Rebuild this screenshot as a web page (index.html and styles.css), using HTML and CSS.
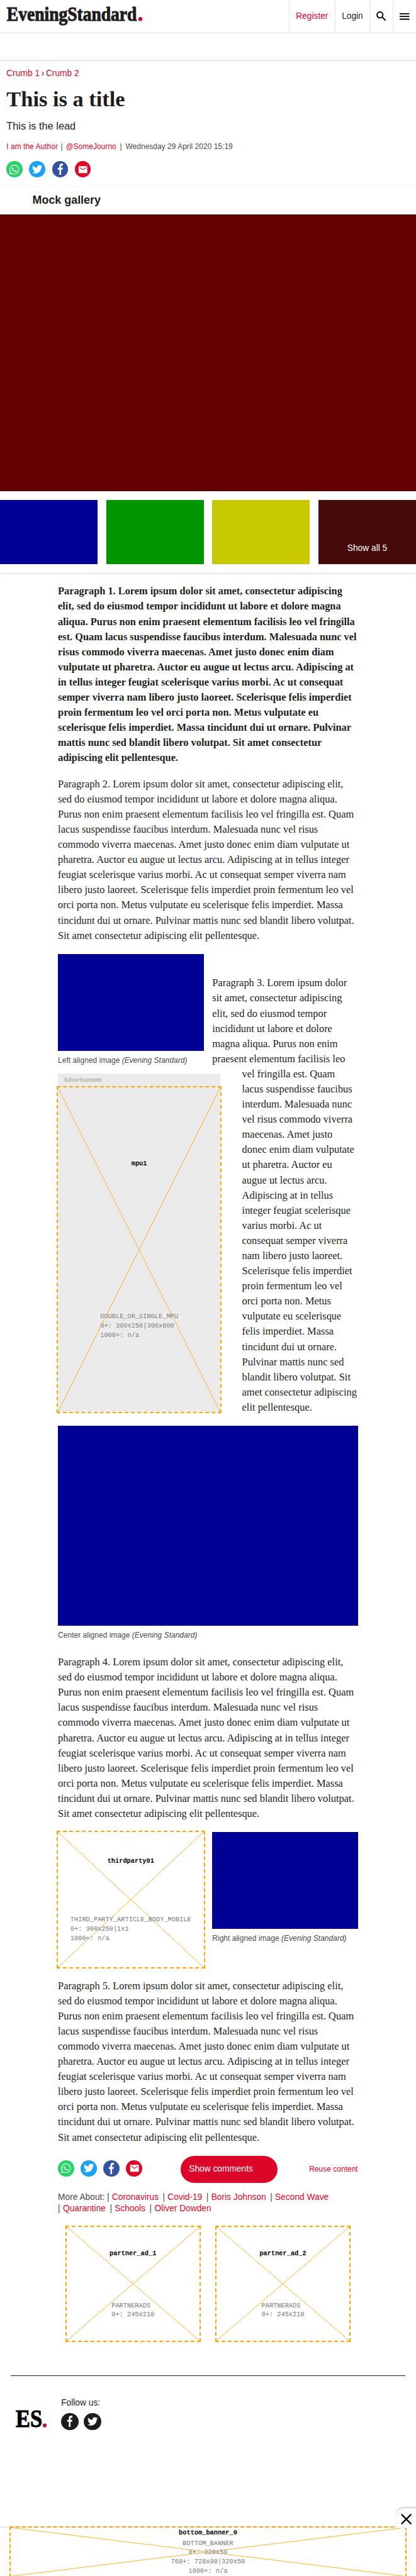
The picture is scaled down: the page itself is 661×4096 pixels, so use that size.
FILE: index.html
```html
<!DOCTYPE html>
<html lang="en">
<head>
<meta charset="utf-8">
<title>This is a title | Evening Standard</title>
<link rel="stylesheet" href="styles.css">
</head>
<body>
<svg class="defs" aria-hidden="true">
  <symbol id="i-whatsapp" viewBox="0 0 24 24"><path fill="currentColor" d="M17.5 14.4c-.3-.15-1.75-.86-2-.96-.28-.1-.48-.15-.68.15-.2.3-.77.96-.94 1.16-.17.2-.35.22-.64.07-.3-.15-1.26-.46-2.4-1.47-.88-.79-1.48-1.76-1.65-2.06-.17-.3-.02-.46.13-.6.13-.14.3-.35.45-.53.15-.17.2-.3.3-.5.1-.2.05-.37-.03-.52-.07-.15-.67-1.61-.91-2.2-.24-.59-.49-.5-.67-.51h-.57c-.2 0-.52.07-.79.37-.27.3-1.04 1.01-1.04 2.47s1.06 2.88 1.21 3.07c.15.2 2.1 3.2 5.08 4.49.71.3 1.26.49 1.69.62.71.23 1.36.2 1.87.12.57-.08 1.76-.71 2-1.4.25-.7.25-1.3.18-1.42-.07-.13-.27-.2-.57-.35zM12.05 21.8a9.87 9.87 0 0 1-5.03-1.38l-.36-.21-3.74.98 1-3.65-.24-.37a9.86 9.86 0 0 1-1.5-5.26c0-5.45 4.43-9.88 9.88-9.88a9.88 9.88 0 0 1 9.88 9.89c0 5.45-4.43 9.88-9.89 9.88zm8.42-18.3A11.82 11.82 0 0 0 12.05 0C5.5 0 .16 5.33.16 11.89c0 2.1.55 4.14 1.59 5.94L.06 24l6.3-1.65a11.88 11.88 0 0 0 5.69 1.45c6.55 0 11.89-5.34 11.89-11.9a11.82 11.82 0 0 0-3.48-8.4z"/></symbol>
  <symbol id="i-twitter" viewBox="0 0 24 24"><path fill="currentColor" d="M23.95 4.57a10 10 0 0 1-2.82.77 4.96 4.96 0 0 0 2.16-2.72c-.95.55-2 .96-3.13 1.18a4.92 4.92 0 0 0-8.38 4.48C7.69 8.1 4.07 6.13 1.64 3.16a4.82 4.82 0 0 0-.67 2.48c0 1.71.87 3.21 2.19 4.1a4.9 4.9 0 0 1-2.23-.62v.06a4.92 4.92 0 0 0 3.95 4.83 5 5 0 0 1-2.21.08 4.94 4.94 0 0 0 4.6 3.42A9.87 9.87 0 0 1 0 19.54a13.99 13.99 0 0 0 7.55 2.21c9.05 0 14-7.5 14-13.98 0-.21 0-.42-.02-.63a9.94 9.94 0 0 0 2.46-2.55z"/></symbol>
  <symbol id="i-facebook" viewBox="0 0 12 24"><path fill="currentColor" d="M7.8 24V13.1h3.2l.5-4.2H7.8V6.2c0-1.2.4-2 2.1-2h1.9V.3C11.4.2 10.3.1 9.1.1 6.2.1 4.2 1.9 4.2 5.2v3.700H.8v4.200h3.400V24z"/></symbol>
  <symbol id="i-mail" viewBox="0 0 18 18"><path fill="currentColor" d="M1 2.600h16v12.800H1z"/><path fill="none" stroke="#dd0528" stroke-width="1.2" d="M3 5.300l6 3.800 6-3.800"/></symbol>
</svg>
<div class="page">
  <header class="header">
    <div class="masthead">
      <a class="logo"><svg width="258" height="50" viewBox="0 0 258 50"><text class="logo-text" x="1" y="33" textLength="240" lengthAdjust="spacingAndGlyphs">EveningStandard</text><circle cx="247.500" cy="29.300" r="3.700" fill="#dd0528"/></svg></a>
      <nav class="tools">
        <a class="tool register">Register</a>
        <a class="tool login">Login</a>
        <a class="tool search"><svg width="18" height="18" viewBox="0 0 18 18"><circle cx="6.600" cy="6.600" r="5.400"/><path d="M10.500 10.500L17 17"/></svg></a>
        <a class="tool menu"><svg width="18" height="12" viewBox="0 0 18 12"><path d="M0 1h18M0 6h18M0 11h18"/></svg></a>
      </nav>
    </div>
    <div class="subnav"></div>
  </header>
  <section class="intro">
    <nav class="crumbs"><a>Crumb 1</a><span class="sep">›</span><a>Crumb 2</a></nav>
    <h1>This is a title</h1>
    <p class="lead">This is the lead</p>
    <p class="byline"><a>I am the Author</a><span class="bar">|</span><a>@SomeJourno</a><span class="bar wide">|</span><span>Wednesday 29 April 2020 15:19</span></p>
    <div class="share">
      <a class="dot wa"><svg><use href="#i-whatsapp"/></svg></a>
      <a class="dot tw"><svg><use href="#i-twitter"/></svg></a>
      <a class="dot fb"><svg><use href="#i-facebook"/></svg></a>
      <a class="dot ml"><svg><use href="#i-mail"/></svg></a>
    </div>
  </section>
  <section class="gallery">
    <h2>Mock gallery</h2>
    <div class="hero"></div>
    <div class="thumbs">
      <div class="thumb blue"></div>
      <div class="thumb green"></div>
      <div class="thumb yellow"></div>
      <div class="thumb more">Show all 5</div>
    </div>
  </section>
  <article class="body">
    <p class="first">Paragraph 1. Lorem ipsum dolor sit amet, consectetur adipiscing elit, sed do eiusmod tempor incididunt ut labore et dolore magna aliqua. Purus non enim praesent elementum facilisis leo vel fringilla est. Quam lacus suspendisse faucibus interdum. Malesuada nunc vel risus commodo viverra maecenas. Amet justo donec enim diam vulputate ut pharetra. Auctor eu augue ut lectus arcu. Adipiscing at in tellus integer feugiat scelerisque varius morbi. Ac ut consequat semper viverra nam libero justo laoreet. Scelerisque felis imperdiet proin fermentum leo vel orci porta non. Metus vulputate eu scelerisque felis imperdiet. Massa tincidunt dui ut ornare. Pulvinar mattis nunc sed blandit libero volutpat. Sit amet consectetur adipiscing elit pellentesque.</p>
    <p>Paragraph 2. Lorem ipsum dolor sit amet, consectetur adipiscing elit, sed do eiusmod tempor incididunt ut labore et dolore magna aliqua. Purus non enim praesent elementum facilisis leo vel fringilla est. Quam lacus suspendisse faucibus interdum. Malesuada nunc vel risus commodo viverra maecenas. Amet justo donec enim diam vulputate ut pharetra. Auctor eu augue ut lectus arcu. Adipiscing at in tellus integer feugiat scelerisque varius morbi. Ac ut consequat semper viverra nam libero justo laoreet. Scelerisque felis imperdiet proin fermentum leo vel orci porta non. Metus vulputate eu scelerisque felis imperdiet. Massa tincidunt dui ut ornare. Pulvinar mattis nunc sed blandit libero volutpat. Sit amet consectetur adipiscing elit pellentesque.</p>
    <div class="wrap">
      <figure class="left"><div class="img"></div><figcaption>Left aligned image <i>(Evening Standard)</i></figcaption></figure>
      <aside class="mpu">
        <div class="label">Advertisement</div>
        <div class="ad"><svg class="cross"><line x1="0" y1="0" x2="100%" y2="100%"/><line x1="100%" y1="0" x2="0" y2="100%"/></svg><b>mpu1</b><div class="spec">DOUBLE_OR_SINGLE_MPU<br>0+: 300x250|300x600<br>1000+: n/a</div></div>
      </aside>
      <p>Paragraph 3. Lorem ipsum dolor sit amet, consectetur adipiscing elit, sed do eiusmod tempor incididunt ut labore et dolore magna aliqua. Purus non enim praesent elementum facilisis leo vel fringilla est. Quam lacus suspendisse faucibus interdum. Malesuada nunc vel risus commodo viverra maecenas. Amet justo donec enim diam vulputate ut pharetra. Auctor eu augue ut lectus arcu. Adipiscing at in tellus integer feugiat scelerisque varius morbi. Ac ut consequat semper viverra nam libero justo laoreet. Scelerisque felis imperdiet proin fermentum leo vel orci porta non. Metus vulputate eu scelerisque felis imperdiet. Massa tincidunt dui ut ornare. Pulvinar mattis nunc sed blandit libero volutpat. Sit amet consectetur adipiscing elit pellentesque.</p>
    </div>
    <figure class="center"><div class="img"></div><figcaption>Center aligned image <i>(Evening Standard)</i></figcaption></figure>
    <p>Paragraph 4. Lorem ipsum dolor sit amet, consectetur adipiscing elit, sed do eiusmod tempor incididunt ut labore et dolore magna aliqua. Purus non enim praesent elementum facilisis leo vel fringilla est. Quam lacus suspendisse faucibus interdum. Malesuada nunc vel risus commodo viverra maecenas. Amet justo donec enim diam vulputate ut pharetra. Auctor eu augue ut lectus arcu. Adipiscing at in tellus integer feugiat scelerisque varius morbi. Ac ut consequat semper viverra nam libero justo laoreet. Scelerisque felis imperdiet proin fermentum leo vel orci porta non. Metus vulputate eu scelerisque felis imperdiet. Massa tincidunt dui ut ornare. Pulvinar mattis nunc sed blandit libero volutpat. Sit amet consectetur adipiscing elit pellentesque.</p>
    <div class="pair">
      <div class="ad third"><svg class="cross"><line x1="0" y1="0" x2="100%" y2="100%"/><line x1="100%" y1="0" x2="0" y2="100%"/></svg><b>thirdparty01</b><div class="spec">THIRD_PARTY_ARTICLE_BODY_MOBILE<br>0+: 300x250|1x1<br>1000+: n/a</div></div>
      <figure class="right"><div class="img"></div><figcaption>Right aligned image <i>(Evening Standard)</i></figcaption></figure>
    </div>
    <p>Paragraph 5. Lorem ipsum dolor sit amet, consectetur adipiscing elit, sed do eiusmod tempor incididunt ut labore et dolore magna aliqua. Purus non enim praesent elementum facilisis leo vel fringilla est. Quam lacus suspendisse faucibus interdum. Malesuada nunc vel risus commodo viverra maecenas. Amet justo donec enim diam vulputate ut pharetra. Auctor eu augue ut lectus arcu. Adipiscing at in tellus integer feugiat scelerisque varius morbi. Ac ut consequat semper viverra nam libero justo laoreet. Scelerisque felis imperdiet proin fermentum leo vel orci porta non. Metus vulputate eu scelerisque felis imperdiet. Massa tincidunt dui ut ornare. Pulvinar mattis nunc sed blandit libero volutpat. Sit amet consectetur adipiscing elit pellentesque.</p>
    <div class="actions">
      <div class="share">
        <a class="dot wa"><svg><use href="#i-whatsapp"/></svg></a>
        <a class="dot tw"><svg><use href="#i-twitter"/></svg></a>
        <a class="dot fb"><svg><use href="#i-facebook"/></svg></a>
        <a class="dot ml"><svg><use href="#i-mail"/></svg></a>
      </div>
      <a class="comments">Show comments</a>
      <a class="reuse">Reuse content</a>
    </div>
    <div class="topics">More About: <i>|</i><a>Coronavirus</a> <i>|</i><a>Covid-19</a> <i>|</i><a>Boris Johnson</a> <i>|</i><a>Second Wave</a><br><i>|</i><a>Quarantine</a> <i>|</i><a>Schools</a> <i>|</i><a>Oliver Dowden</a></div>
    <div class="partners">
      <div class="ad partner"><svg class="cross"><line x1="0" y1="0" x2="100%" y2="100%"/><line x1="100%" y1="0" x2="0" y2="100%"/></svg><b>partner_ad_1</b><div class="spec">PARTNERADS<br>0+: 245x210</div></div>
      <div class="ad partner"><svg class="cross"><line x1="0" y1="0" x2="100%" y2="100%"/><line x1="100%" y1="0" x2="0" y2="100%"/></svg><b>partner_ad_2</b><div class="spec">PARTNERADS<br>0+: 245x210</div></div>
    </div>
  </article>
  <footer class="footer">
    <svg class="es" width="60" height="52" viewBox="0 0 60 52"><text class="es-text" x="0" y="42" textLength="49" lengthAdjust="spacingAndGlyphs">ES</text><circle cx="53.500" cy="39" r="3.600" fill="#c8102e"/></svg>
    <div class="follow">
      <span>Follow us:</span>
      <div class="socials"><a class="dot fb"><svg><use href="#i-facebook"/></svg></a><a class="dot tw"><svg><use href="#i-twitter"/></svg></a></div>
    </div>
  </footer>
  <div class="banner">
    <div class="ad bottom"><svg class="cross"><line x1="0" y1="0" x2="100%" y2="100%"/><line x1="100%" y1="0" x2="0" y2="100%"/></svg><b>bottom_banner_0</b><div class="spec">BOTTOM_BANNER<br>0+: 320x50<br>768+: 728x90|320x50<br>1000+: n/a</div></div>
    <a class="close"><svg width="20" height="20" viewBox="0 0 20 20"><path d="M1 1l18 18M19 1L1 19"/></svg></a>
  </div>
</div>
</body>
</html>
```
FILE: styles.css
```css
* { box-sizing: border-box; }
html, body { margin: 0; overflow: hidden; background: #fff; }
.defs { display: none; }
.page {
  zoom: 0.8604;
  width: 768.2px;
  height: 4761px;
  overflow: hidden;
  display: flex;
  flex-direction: column;
  font: 16px/1.3 "Liberation Sans", Arial, sans-serif;
  color: #1d1d1b;
}
h1, h2, p, figure { margin: 0; }
a { color: #dd0528; }
svg { display: block; overflow: visible; }

.header { height: 110px; box-shadow: 0 1px 4px rgba(0, 0, 0, .3); flex: none; }
.masthead { display: flex; justify-content: space-between; height: 62px; border-bottom: 1px solid #e3e3e3; }
.logo { padding: 6px 0 0 12px; }
.logo-text { font: bold 36px "Liberation Serif", serif; fill: #1d1d1b; stroke: #1d1d1b; stroke-width: 1.2; }
.tools { display: flex; }
.tool { display: flex; align-items: center; justify-content: center; border-left: 1px solid #e3e3e3; }
.register { width: 85px; }
.login { width: 64px; color: #1d1d1b; }
.search, .menu { width: 43px; }
.tool svg { fill: none; stroke: #000; stroke-width: 2.2; }

.intro { height: 234px; padding: 16px 12px 0; flex: none; }
.crumbs { display: flex; line-height: 20px; }
.crumbs .sep { width: 11.500px; text-align: center; }
h1 { margin-top: 13px; font: bold 40px/48px "Liberation Serif", serif; }
.lead { margin-top: 14px; font-size: 19px; line-height: 24px; }
.byline { display: flex; margin-top: 16px; font-size: 14px; line-height: 20px; color: #4a4a4a; }
.byline .bar { width: 14.500px; text-align: center; }
.byline .bar.wide { width: 17px; }
.share { display: flex; gap: 12px; }
.intro .share { margin-top: 17px; }
.dot { display: flex; align-items: center; justify-content: center; width: 30px; height: 30px; border-radius: 50%; color: #fff; }
.dot svg { width: 18px; height: 18px; }
.wa { background: #25d366; }
.tw { background: #1da1f2; }
.fb { background: #3353a0; }
.ml { background: #dd0528; }
.dot.fb svg { height: 21px; }
.dot.tw svg { width: 19px; height: 19px; }

.gallery { height: 715px; flex: none; box-shadow: 0 1px 4px rgba(0, 0, 0, .25); }
h2 { height: 52px; padding: 12px 60px 0; font-size: 20.800px; line-height: 28px; }
.hero { height: 512px; background: #640000; }
.thumbs { display: grid; grid-template-columns: repeat(4, 1fr); gap: 16px; margin-top: 16px; }
.thumb { height: 119px; }
.blue { background: #000096; }
.green { background: #009600; }
.yellow { background: #c8c800; }
.more { display: flex; justify-content: center; align-items: flex-end; padding-bottom: 19px; background: #460a0a; color: #fff; }

.body { width: 554px; margin: 20px 0 0 107px; font: 19.100px/28px "Liberation Serif", serif; flex: none; }
.body > p { margin-bottom: 20px; }
.body > .first { font-size: 19px; font-weight: bold; }
.img { background: #000096; }
figcaption { padding-top: 8px; font: 14px/20px "Liberation Sans", Arial, sans-serif; color: #4a4a4a; }
.wrap { height: 872px; }
.wrap p { padding-top: 40px; }
.left { float: left; width: 285px; height: 221px; padding-right: 16px; }
.left .img, .right .img { height: 179px; }
.mpu { float: left; clear: left; width: 300px; margin-right: 40px; background: #ebebeb; }
.label { height: 25px; padding-left: 10px; font-size: 12px; line-height: 24px; color: #999; }
.ad {
  position: relative;
  display: flex;
  flex-direction: column;
  align-items: center;
  justify-content: space-around;
  outline: 2.4px dashed orange;
  font: 12px/17px "Liberation Mono", monospace;
  color: #777;
}
.ad b { position: relative; color: #000; text-shadow: 0 0 3px #fff; }
.spec { position: relative; text-shadow: 0 0 3px #fff; }
.cross { position: absolute; inset: 0; width: 100%; height: 100%; stroke: orange; stroke-width: 1; }
.mpu .ad { height: 600px; }
.center .img { height: 369px; }
.center { margin-bottom: 26px; }
.pair { display: grid; grid-template-columns: 269px 269px; gap: 16px; margin-bottom: 20px; }
.third { height: 250px; }

.actions { display: flex; justify-content: space-between; align-items: center; font-family: "Liberation Sans", Arial, sans-serif; }
.actions .share { width: 226px; margin-top: -4px; }
.comments { width: 180px; height: 50px; padding-left: 16px; border-radius: 25px; background: #dd0528; color: #fff; font-size: 16px; line-height: 49px; }
.reuse { flex: 1; text-align: right; font-size: 14px; }
.topics { margin-top: 16px; font: 16px/21px "Liberation Sans", Arial, sans-serif; color: #4a4a4a; }
.topics i { font-style: normal; margin-right: 5px; }
.topics a { margin-right: 3px; }
.partners { display: grid; grid-template-columns: 1fr 1fr; justify-items: center; margin-top: 24px; }
.partner { width: 245px; height: 210px; }

.footer { display: flex; margin: 64px 20px 0; padding: 39px 0 0 9px; border-top: 1px solid #1d1d1b; flex: none; height: 281px; }
.es { margin: 13px 24px 0 0; }
.es-text { font: bold 46px "Liberation Serif", serif; fill: #000; stroke: #000; stroke-width: 1.2; }
.follow span { display: block; line-height: 20px; }
.socials { display: flex; gap: 10px; margin-top: 9px; }
.socials .dot { width: 32px; height: 32px; background: #1d1d1b; }

.banner { position: relative; flex: none; height: 90px; padding: 0 20px; box-shadow: 0 -1px 4px rgba(0, 0, 0, .2); }
.bottom { height: 90px; text-align: center; }
.close { position: absolute; right: 0; top: -36px; width: 36px; height: 37px; padding: 10px 0 0 8px; background: #fff; border-radius: 12px 0 0 0; box-shadow: 0 -1px 2px rgba(0, 0, 0, .3); clip-path: inset(-4px 0 0 -4px); }
.close path { fill: none; stroke: #000; stroke-width: 2.6; }
```
